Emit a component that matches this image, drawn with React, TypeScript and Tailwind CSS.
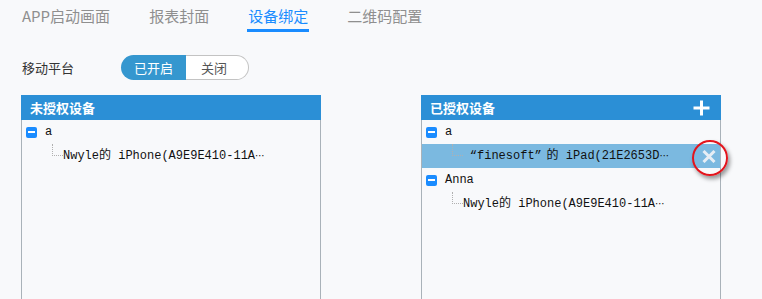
import React from "react";

const SANS = "font-['Noto_Sans_CJK_SC','Noto_Sans',sans-serif]";
const MONO = "font-['Liberation_Mono','Noto_Sans_CJK_SC',monospace]";

function MinusBox() {
  return (
    <span className="ml-[4px] flex h-[11px] w-[11px] shrink-0 items-center justify-center rounded-[2px] bg-[#1a8cff]">
      <span className="h-[2px] w-[7px] bg-white" />
    </span>
  );
}

function GroupRow({ label }: { label: string }) {
  return (
    <div className={`flex h-[24px] items-center ${MONO} text-[12px] leading-[24px] text-[#111]`}>
      <MinusBox />
      <span className="ml-[8px]">{label}</span>
    </div>
  );
}

function Ellipsis() {
  return <span className="inline-block w-[10px] font-['DejaVu_Sans',sans-serif] text-[10px]">⋯</span>;
}

function ChildRow({
  label,
  selected,
  children,
}: {
  label: React.ReactNode;
  selected?: boolean;
  children?: React.ReactNode;
}) {
  return (
    <div
      className={`relative flex h-[24px] items-center pl-[41px] ${MONO} text-[12px] leading-[24px] text-[#111] ${
        selected ? "bg-[#7bb9e0]" : ""
      }`}
    >
      <span className="absolute left-[30px] top-0 h-[12px] w-[11px] border-b border-l border-dotted border-[#b0b0b0]" />
      <span className="whitespace-nowrap">{label}</span>
      {children}
    </div>
  );
}

function Panel({
  title,
  plus,
  children,
}: {
  title: string;
  plus?: boolean;
  children?: React.ReactNode;
}) {
  return (
    <div className="flex w-[300px] flex-col">
      <div className="flex h-[25px] items-center justify-between bg-[#2b8fd6] pl-[9px] pr-[11px]">
        <span className={`${SANS} text-[13px] font-bold leading-[25px] text-white`}>{title}</span>
        {plus && (
          <svg width="17" height="16" viewBox="0 0 17 16">
            <path d="M8.5 0.5V15.5M0.5 8H16.5" stroke="white" strokeWidth="3" />
          </svg>
        )}
      </div>
      <div className="h-[200px] border-x border-[#a9b2b9]">{children}</div>
    </div>
  );
}

export default function App() {
  const tabs = ["APP启动画面", "报表封面", "设备绑定", "二维码配置"];
  return (
    <div className={`h-[299px] w-[762px] overflow-hidden bg-[#f8f9fb] ${SANS}`}>
      <div className="flex gap-[39px] pl-[22px]">
        {tabs.map((t, i) => (
          <div
            key={t}
            className={`border-b-[3px] pb-[4px] pt-[6px] text-[15px] leading-[19px] ${
              i === 2 ? "-mx-[1px] border-[#1a8cff] px-[1px] text-[#1a8cff]" : "border-transparent text-[#8f8f8f]"
            }`}
          >
            {t}
          </div>
        ))}
      </div>

      <div className="mt-[23px] flex h-[25px] items-center pl-[22px]">
        <span className="w-[99px] text-[13px] leading-[25px] text-[#333]">移动平台</span>
        <div className="flex h-[25px] text-[13px] leading-[23px]">
          <div className="flex w-[65px] items-center justify-center rounded-l-full bg-[#3597cf] text-white">
            已开启
          </div>
          <div className="flex w-[63px] items-center justify-center rounded-r-full border border-l-0 border-[#c3c3c3] bg-white pr-[6px] text-[#555]">
            关闭
          </div>
        </div>
      </div>

      <div className="mt-[15px] flex gap-[100px] pl-[21px]">
        <Panel title="未授权设备">
          <GroupRow label="a" />
          <ChildRow
            label={
              <>
                Nwyle的 iPhone(A9E9E410-11A<Ellipsis />
              </>
            }
          />
        </Panel>
        <Panel title="已授权设备" plus>
          <GroupRow label="a" />
          <ChildRow
            label={
              <>
                <span className="inline-block w-[14px] text-right">“</span>finesoft
                <span className="inline-block w-[12px] text-left">”</span>的 iPad(21E2653D<Ellipsis />
              </>
            }
            selected
          >
            <svg
              className="absolute left-[280px] top-[6px]"
              width="14"
              height="13"
              viewBox="0 0 14 13"
            >
              <path d="M1.5 1L12.5 12M12.5 1L1.5 12" stroke="#e6eef5" strokeWidth="3" />
            </svg>
            <span className="absolute left-[270px] top-[-4px] z-10 h-[36px] w-[36px] rounded-full border-2 border-[#e3141c] shadow-[2px_3px_4px_rgba(0,0,0,0.4)]" />
          </ChildRow>
          <GroupRow label="Anna" />
          <ChildRow
            label={
              <>
                Nwyle的 iPhone(A9E9E410-11A<Ellipsis />
              </>
            }
          />
        </Panel>
      </div>
    </div>
  );
}
